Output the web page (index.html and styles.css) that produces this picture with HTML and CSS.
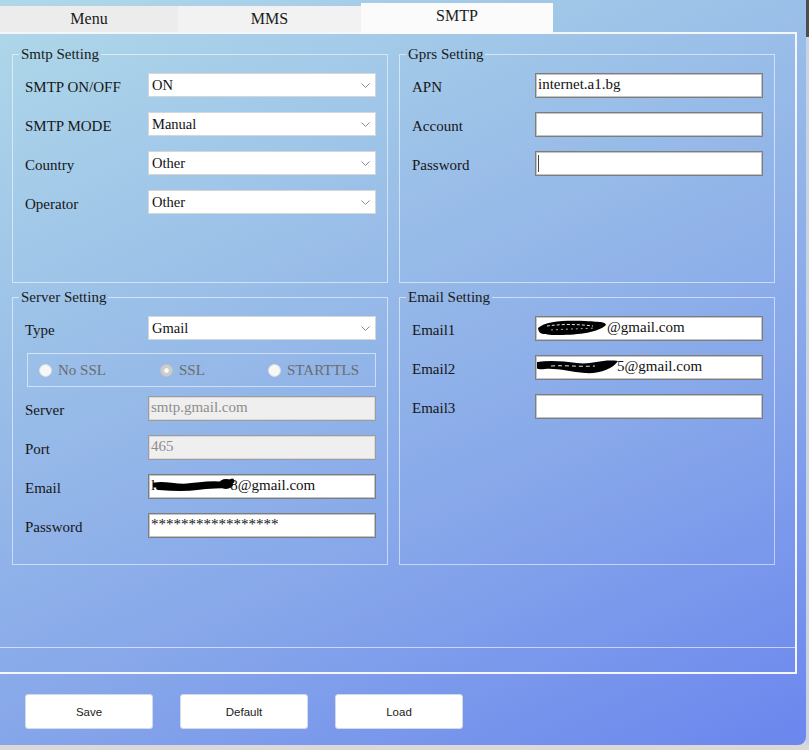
FILE: index.html
```html
<!DOCTYPE html>
<html lang="en">
<head>
  <meta charset="UTF-8" />
  <meta name="viewport" content="width=device-width, initial-scale=1" />
  <title>SMTP Setting</title>
  <link rel="stylesheet" href="styles.css">
</head>
<body>
  <div class="shell">
    <div class="window">
      <div class="tabs">
        <div class="tab tab-menu">Menu</div>
        <div class="tab tab-mms">MMS</div>
        <div class="tab tab-active">SMTP</div>
      </div>

      <div class="page">
        <div class="groups">
          <!-- Smtp -->
          <fieldset class="group">
            <legend>Smtp Setting</legend>
            <div class="rows">
              <label class="lbl">SMTP ON/OFF</label>
              <div class="combo">
                <select><option>ON</option></select>
                <svg class="chev" width="9" height="5" viewBox="0 0 9 5"><path d="M0.5 0.5 L4.5 4.5 L8.5 0.5" fill="none" stroke="#8a8a8a" stroke-width="1"/></svg>
              </div>

              <label class="lbl">SMTP MODE</label>
              <div class="combo">
                <select><option>Manual</option></select>
                <svg class="chev" width="9" height="5" viewBox="0 0 9 5"><path d="M0.5 0.5 L4.5 4.5 L8.5 0.5" fill="none" stroke="#8a8a8a" stroke-width="1"/></svg>
              </div>

              <label class="lbl">Country</label>
              <div class="combo">
                <select><option>Other</option></select>
                <svg class="chev" width="9" height="5" viewBox="0 0 9 5"><path d="M0.5 0.5 L4.5 4.5 L8.5 0.5" fill="none" stroke="#8a8a8a" stroke-width="1"/></svg>
              </div>

              <label class="lbl">Operator</label>
              <div class="combo">
                <select><option>Other</option></select>
                <svg class="chev" width="9" height="5" viewBox="0 0 9 5"><path d="M0.5 0.5 L4.5 4.5 L8.5 0.5" fill="none" stroke="#8a8a8a" stroke-width="1"/></svg>
              </div>
            </div>
          </fieldset>

          <!-- Gprs -->
          <fieldset class="group">
            <legend>Gprs Setting</legend>
            <div class="rows">
              <label class="lbl">APN</label>
              <input class="text" type="text" value="internet.a1.bg">

              <label class="lbl">Account</label>
              <input class="text" type="text" value="">

              <label class="lbl">Password</label>
              <div class="field">
                <input class="text" type="text" value="">
                <span class="caret"></span>
              </div>
            </div>
          </fieldset>

          <!-- Server -->
          <fieldset class="group">
            <legend>Server Setting</legend>
            <div class="rows">
              <label class="lbl">Type</label>
              <div class="combo">
                <select><option>Gmail</option></select>
                <svg class="chev" width="9" height="5" viewBox="0 0 9 5"><path d="M0.5 0.5 L4.5 4.5 L8.5 0.5" fill="none" stroke="#8a8a8a" stroke-width="1"/></svg>
              </div>

              <div class="ssl-box">
                <label class="opt"><input type="radio" name="ssl" disabled> No SSL</label>
                <label class="opt"><input type="radio" name="ssl" checked disabled> SSL</label>
                <label class="opt"><input type="radio" name="ssl" disabled> STARTTLS</label>
              </div>

              <label class="lbl">Server</label>
              <input class="text" type="text" value="smtp.gmail.com" disabled>

              <label class="lbl">Port</label>
              <input class="text" type="text" value="465" disabled>

              <label class="lbl">Email</label>
              <div class="textbox">
                <span>l</span>
                <svg class="scribble scr-server" width="82" height="16" viewBox="0 0 82 16" preserveAspectRatio="none">
                  <path d="M2 7 C12 5 22 9 34 8 S56 5 66 6 S76 4 79 3" fill="none" stroke="#000" stroke-width="5" stroke-linecap="round"/>
                  <path d="M5 10 C18 11 30 12 44 10 S62 9 74 8" fill="none" stroke="#000" stroke-width="4" stroke-linecap="round"/>
                  <ellipse cx="73" cy="6" rx="7" ry="5" fill="#000"/>
                </svg>
                <span>8@gmail.com</span>
              </div>

              <label class="lbl">Password</label>
              <input class="text" type="text" value="*****************">
            </div>
          </fieldset>

          <!-- Email -->
          <fieldset class="group">
            <legend>Email Setting</legend>
            <div class="rows">
              <label class="lbl">Email1</label>
              <div class="textbox">
                <svg class="scribble scr-one" width="70" height="17" viewBox="0 0 70 17" preserveAspectRatio="none">
                  <path d="M1 9 C8 2 30 1 48 2 S68 3 69 6 C62 13 42 16 22 16 S2 14 1 9Z" fill="#000"/>
                  <path d="M10 7 C24 5 40 5 56 7" fill="none" stroke="#fff" stroke-width="0.9" stroke-dasharray="3 2"/>
                  <path d="M14 11 C28 10 42 10 58 9" fill="none" stroke="#fff" stroke-width="0.7" stroke-dasharray="2 3"/>
                </svg>
                <span>@gmail.com</span>
              </div>

              <label class="lbl">Email2</label>
              <div class="textbox">
                <svg class="scribble scr-two" width="82" height="17" viewBox="0 0 82 17" preserveAspectRatio="none">
                  <path d="M0 4 C12 2 26 3 40 5 S64 1 81 3 C76 11 62 16 48 15 S20 10 8 11 S0 9 0 4Z" fill="#000"/>
                  <path d="M14 8 C28 7 40 9 58 8" fill="none" stroke="#fff" stroke-width="0.9" stroke-dasharray="4 3"/>
                </svg>
                <span>5@gmail.com</span>
              </div>

              <label class="lbl">Email3</label>
              <input class="text" type="text" value="">
            </div>
          </fieldset>
        </div>

        <div class="page-foot"></div>
      </div>

      <div class="actions">
        <button>Save</button>
        <button>Default</button>
        <button>Load</button>
      </div>
    </div>
    <div class="edge"></div>
  </div>
</body>
</html>
```

FILE: styles.css
```css
html, body {
  margin: 0;
  height: 750px;
  overflow: hidden;
}

body {
  background: #d9d9d9;
  font-family: "Liberation Serif", "Times New Roman", serif;
  color: #1a1a1a;
}

.shell {
  display: flex;
  height: 745px;
}

.window {
  width: 806px;
  height: 745px;
  background: linear-gradient(155deg, #afd9e9 0%, #98bce8 38%, #86a6ea 66%, #6b86ee 100%);
  border-bottom-right-radius: 8px;
}

.edge {
  width: 3px;
  background: linear-gradient(#4d4d4d 0 37px, #c9d3e2 37px);
}

/* tabs */
.tabs {
  height: 32px;
  display: flex;
  align-items: flex-end;
}

.tab {
  height: 26px;
  display: flex;
  align-items: center;
  justify-content: center;
  font-size: 16px;
  color: #1a1a1a;
}

.tab-menu {
  width: 178px;
  background: #ececec;
}

.tab-mms {
  width: 183px;
  background: #f2f2f2;
}

.tab-active {
  width: 192px;
  height: 31px;
  margin-bottom: -2px;
  padding-bottom: 5px;
  box-sizing: border-box;
  background: #fbfbfb;
  position: relative;
  z-index: 1;
}

/* tab page */
.page {
  width: 797px;
  height: 642px;
  box-sizing: border-box;
  border: 2px solid #f4f6fb;
  border-left: none;
  display: flex;
  flex-direction: column;
}

.groups {
  padding: 12px 0 0 12px;
  display: grid;
  grid-template-columns: 376px 376px;
  grid-template-rows: 237px 276px;
  column-gap: 11px;
  row-gap: 6px;
}

.page-foot {
  margin-top: auto;
  height: 25px;
  box-sizing: border-box;
  border-top: 1px solid rgba(255, 255, 255, 0.6);
}

.group {
  margin: 0;
  padding: 0 11px 0 6px;
  min-width: 0;
  border: 1px solid rgba(255, 255, 255, 0.55);
}

.group legend {
  padding: 0 2px;
  font-size: 15px;
  line-height: 16px;
  color: #1a1a1a;
}

.rows {
  margin-left: 6px;
  padding-top: 11px;
  display: grid;
  grid-template-columns: 123px 1fr;
  row-gap: 14px;
}

.lbl {
  height: 25px;
  box-sizing: border-box;
  padding-top: 5px;
  font-size: 15px;
  line-height: 19px;
  color: #161616;
}

/* dropdowns */
.combo {
  position: relative;
  height: 25px;
}

.combo select {
  appearance: none;
  -webkit-appearance: none;
  width: 100%;
  height: 24px;
  margin: 0;
  padding: 0 0 0 3px;
  border: 1px solid #d6d6d6;
  border-radius: 0;
  background: #fff;
  font-family: inherit;
  font-size: 14.5px;
  color: #111;
}

.chev {
  position: absolute;
  right: 6px;
  top: 10px;
}

/* text boxes */
.text,
.textbox {
  width: 100%;
  height: 25px;
  margin: 0;
  box-sizing: border-box;
  padding: 0 2px 2px;
  border: 1px solid #7d7d7d;
  box-shadow: inset 0 0 0 1px #c4c4c4;
  background: #fff;
  font-family: inherit;
  font-size: 15px;
  color: #111;
  outline: none;
}

.text:disabled {
  background: #efefef;
  color: #8d8d8d;
  border-color: #9c9c9c;
  box-shadow: inset 0 0 0 1px #d8d8d8;
}

.textbox {
  display: flex;
  align-items: center;
  white-space: nowrap;
  overflow: hidden;
}

.scribble {
  flex: none;
}

.scr-server {
  margin-left: -2px;
  margin-right: -5px;
}

.scr-one {
  margin-left: -1px;
  margin-right: 0;
}

.scr-two {
  margin-left: -1px;
  margin-right: -2px;
}

.field {
  position: relative;
}

.caret {
  position: absolute;
  left: 3px;
  top: 4px;
  width: 1px;
  height: 17px;
  background: #444;
}

/* ssl radios */
.ssl-box {
  grid-column: 1 / 3;
  margin: -2px 0 -5px 2px;
  width: 349px;
  height: 34px;
  box-sizing: border-box;
  border: 1px solid rgba(255, 255, 255, 0.55);
  padding-left: 11px;
  display: grid;
  grid-template-columns: 121px 108px auto;
  align-items: center;
}

.opt {
  display: flex;
  align-items: center;
  gap: 6px;
  font-size: 15px;
  color: #6c6c6c;
}

.opt input {
  appearance: none;
  -webkit-appearance: none;
  margin: 0;
  width: 13px;
  height: 13px;
  border-radius: 50%;
  border: 1px solid #dcdcdc;
  background: #f7f7f7;
}

.opt input:checked {
  background: radial-gradient(circle, #fafafa 0 2px, #cdcdcd 2.5px);
  border-color: #c4c4c4;
}

/* buttons */
.actions {
  display: flex;
  gap: 27px;
  padding: 20px 0 0 25px;
}

.actions button {
  width: 128px;
  height: 35px;
  background: #fff;
  border: 1px solid #d4d9e6;
  border-radius: 3px;
  font-family: "Liberation Sans", Arial, sans-serif;
  font-size: 11.5px;
  color: #1a1a1a;
  cursor: pointer;
}
```
